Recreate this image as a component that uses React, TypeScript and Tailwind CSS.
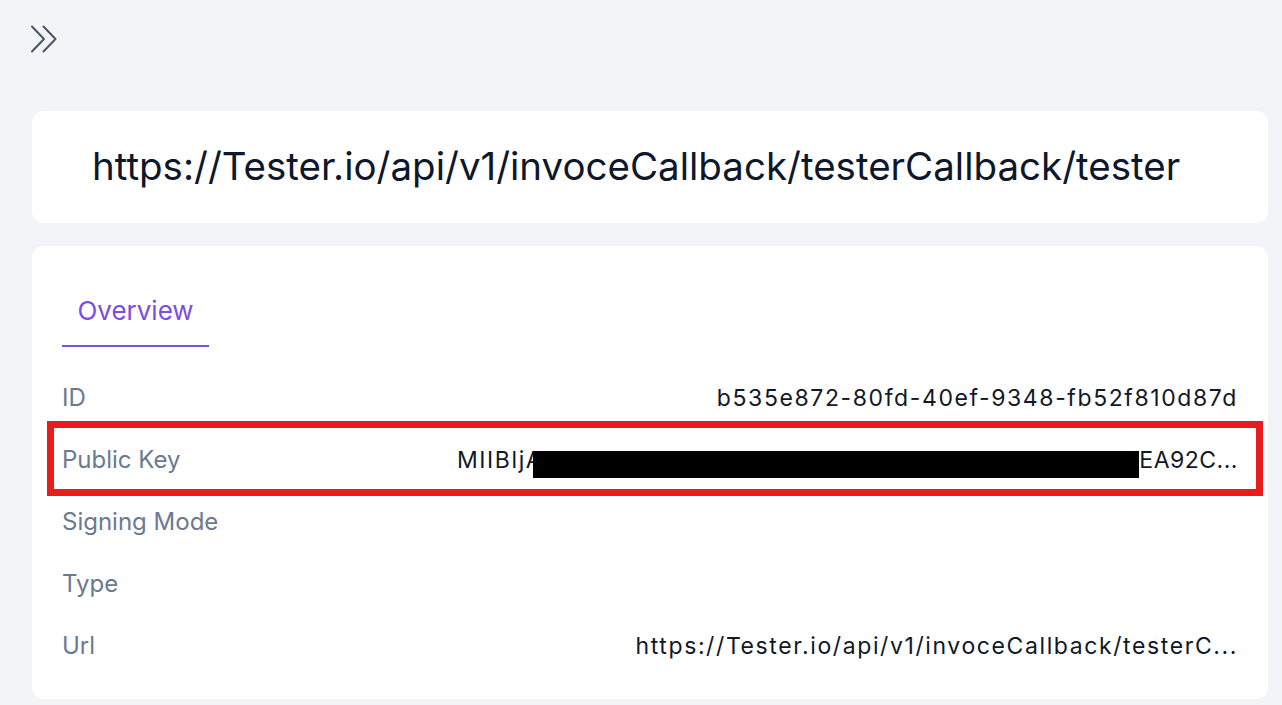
const rows = [
	{ label: 'ID', value: 'b535e872-80fd-40ef-9348-fb52f810d87d' },
	{ label: 'Public Key', value: 'key' },
	{ label: 'Signing Mode', value: '' },
	{ label: 'Type', value: '' },
	{ label: 'Url', value: 'https://Tester.io/api/v1/invoceCallback/testerC...' },
];

function Chevrons() {
	return (
		<svg width="28" height="28" viewBox="0 0 28 28" fill="none" stroke="currentColor" strokeWidth="2" strokeLinecap="round" strokeLinejoin="round">
			<path d="M2 1.5 L14 14 L2 26.5" />
			<path d="M13.5 1.5 L25.5 14 L13.5 26.5" />
		</svg>
	);
}

export default function App() {
	return (
		<div className="min-h-screen bg-[#f3f4f8] pl-8 pr-[14px] pt-[25px] pb-[6px] font-['Inter',sans-serif]">
			<button className="block text-[#4b5563] -ml-[2px]">
				<Chevrons />
			</button>
			<div className="mt-[58px] h-[112px] rounded-xl bg-white flex items-center pl-[60px]">
				<h1 className="text-[38.5px] text-[#0f172a]">https://Tester.io/api/v1/invoceCallback/testerCallback/tester</h1>
			</div>
			<div className="mt-[23px] rounded-xl bg-white px-[30px] pt-[45px] pb-[22px]">
				<div className="flex">
					<div className="w-[147px] text-center text-[26px] text-[#7c4ddf] pb-[15px] border-b-[2.5px] border-[#7c4ddf]">Overview</div>
				</div>
				<div className="mt-[20px]">
					{rows.map((r) => (
						<div key={r.label} className="relative h-[62px] flex items-center justify-between">
							<span className="text-[24px] text-[#6b7a90]">{r.label}</span>
							{r.label === 'Public Key' ? (
								<>
									<span className="text-[23px] tracking-[1.6px] text-[#111827] whitespace-nowrap flex items-center">
										<span>MIIBljA</span>
										<span className="inline-block w-[606px] h-[27px] bg-black -ml-[10px] mt-[8px]" />
										<span className="tracking-[0.5px]">EA92C...</span>
									</span>
									<div className="absolute -left-[15px] -right-[25px] top-[-8px] bottom-[-5px] border-[7px] border-[#e81c1c] pointer-events-none" />
								</>
							) : (
								<span className="text-[23px] tracking-[1.6px] text-[#111827] whitespace-nowrap">{r.value}</span>
							)}
						</div>
					))}
				</div>
			</div>
		</div>
	);
}
